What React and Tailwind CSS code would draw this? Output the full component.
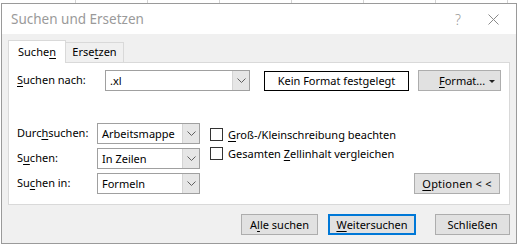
import React from 'react';

const font = { fontFamily: '"Noto Sans", "Open Sans", sans-serif' };

function Chevron() {
  return (
    <svg width="9" height="5" viewBox="0 0 9 5" fill="none">
      <path d="M0.5 0.5 L4.5 4.5 L8.5 0.5" stroke="#606060" strokeWidth="1" />
    </svg>
  );
}

function Select({ value, w }) {
  return (
    <div className={`flex h-[21px] ${w} border border-[#a0a0a0] bg-white`}>
      <div className="flex flex-1 items-center pl-[4px] text-[11px] leading-none">{value}</div>
      <div className="flex w-[17px] items-center justify-center border-l border-[#d4d4d4] bg-[#e6e6e6]">
        <Chevron />
      </div>
    </div>
  );
}

function Btn({ children, className = '' }) {
  return (
    <div className={`flex h-[21px] items-center justify-center border border-[#adadad] bg-[#e1e1e1] text-[11px] leading-none ${className}`}>
      {children}
    </div>
  );
}

function Check({ children }) {
  return (
    <div className="flex h-[19px] items-center gap-[5px]">
      <div className="h-[13px] w-[13px] border border-[#333] bg-white" />
      <span className="text-[11px] leading-none">{children}</span>
    </div>
  );
}

export default function App() {
  return (
    <div className="h-[245px] w-[517px] overflow-hidden bg-white text-black" style={font}>
      {/* Excel grid peeking out behind the dialog */}
      <div className="flex h-[3px]">
        <div className="w-[76px] border-r border-[#d4d4d4]" />
        <div className="w-[72px] border-r border-[#d4d4d4]" />
        <div className="w-[72px] border-r border-[#d4d4d4]" />
        <div className="w-[72px] border-r border-[#d4d4d4]" />
        <div className="w-[72px] border-r border-[#d4d4d4]" />
        <div className="w-[72px] border-r border-[#d4d4d4]" />
        <div className="w-[72px] border-r border-[#d4d4d4]" />
      </div>

      <div className="ml-[1px] flex h-[241px] w-[516px] flex-col border border-[#9a9a9a] bg-[#f0f0f0]">
        {/* title bar */}
        <div className="flex h-[30px] items-center bg-white pl-[9px]">
          <span className="text-[13.5px] text-[#9a9a9a]">Suchen und Ersetzen</span>
          <span className="ml-auto mr-[27px] text-[14px] font-light text-[#9a9a9a]">?</span>
          <svg width="11" height="11" viewBox="0 0 11 11" className="mr-[17px]">
            <path d="M0.5 0.5 L10.5 10.5 M10.5 0.5 L0.5 10.5" stroke="#8a8a8a" strokeWidth="1" />
          </svg>
        </div>

        {/* tabs */}
        <div className="box-content flex h-[22px] items-end pl-[6px] pt-[6px]">
          <div className="relative z-10 -mb-px flex h-[23px] w-[58px] items-center justify-center border border-b-0 border-[#d9d9d9] bg-white text-[11px]">
            Suche<u className="underline-offset-2">n</u>
          </div>
          <div className="flex h-[20px] w-[58px] items-center justify-center border border-b-0 border-l-0 border-[#d9d9d9] bg-[#f0f0f0] text-[11px]">
            Erse<u className="underline-offset-2">t</u>zen
          </div>
        </div>

        {/* panel */}
        <div className="ml-[6px] flex h-[143px] w-[502px] flex-col border border-[#d9d9d9] bg-white">
          <div className="mt-[7px] flex items-center">
            <div className="w-[96px] pl-[8px] text-[11px]">
              <u className="underline-offset-2">S</u>uchen nach:
            </div>
            <Select value=".xl" w="w-[145px]" />
            <div className="ml-[14px] flex h-[20px] w-[145px] items-center justify-center border border-black text-[11px] leading-none">
              Kein Format festgelegt
            </div>
            <Btn className="relative ml-[9px] w-[83px] !justify-start pl-[20px]">
              <span>
                <u className="underline-offset-2">F</u>ormat...
              </span>
              <svg width="6" height="3" viewBox="0 0 6 3" className="absolute right-[5px] top-[9px]">
                <path d="M0 0 H6 L3 3 Z" fill="#222" />
              </svg>
            </Btn>
          </div>

          <div className="mt-[32px] flex">
            <div className="flex flex-col gap-[4px]">
              <div className="flex items-center">
                <div className="w-[88px] pl-[8px] text-[11px]">
                  Durc<u className="underline-offset-2">h</u>suchen:
                </div>
                <Select value="Arbeitsmappe" w="w-[103px]" />
              </div>
              <div className="flex items-center">
                <div className="w-[88px] pl-[8px] text-[11px]">
                  S<u className="underline-offset-2">u</u>chen:
                </div>
                <Select value="In Zeilen" w="w-[103px]" />
              </div>
              <div className="flex items-center">
                <div className="w-[88px] pl-[8px] text-[11px]">
                  Su<u className="underline-offset-2">c</u>hen in:
                </div>
                <Select value="Formeln" w="w-[103px]" />
              </div>
            </div>

            <div className="ml-[10px] mt-[2px] flex flex-col">
              <Check>
                <u className="underline-offset-2">G</u>roß-/Kleinschreibung beachten
              </Check>
              <Check>
                Gesamten <u className="underline-offset-2">Z</u>ellinhalt vergleichen
              </Check>
            </div>

            <div className="ml-auto mr-[9px] flex items-end">
              <Btn className="w-[86px] tracking-[0.2px]">
                <u className="underline-offset-2">O</u>ptionen &lt; &lt;
              </Btn>
            </div>
          </div>
        </div>

        {/* bottom buttons */}
        <div className="mt-[9px] flex pr-[6px]">
          <Btn className="ml-auto w-[77px]">
            A<u className="underline-offset-2">l</u>le suchen
          </Btn>
          <div className="ml-[10px] flex h-[21px] w-[88px] items-center justify-center border-2 border-[#0078d7] bg-[#e1e1e1] text-[11px] leading-none">
            <u className="underline-offset-2">W</u>eitersuchen
          </div>
          <Btn className="ml-[19px] w-[75px]">Schließen</Btn>
        </div>
      </div>
    </div>
  );
}
